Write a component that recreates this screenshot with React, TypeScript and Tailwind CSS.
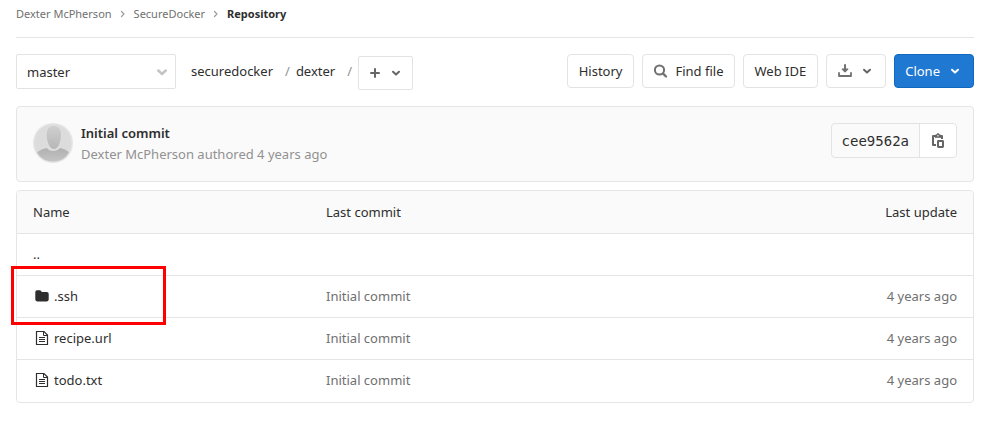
import type { ReactNode } from 'react';

const button =
  'flex h-[34px] items-center gap-1.5 rounded border border-[#e3e3e3] bg-white text-[#2e2e2e] hover:bg-gray-50';

function Chevron({ className = '' }: { className?: string }) {
  return (
    <svg viewBox="0 0 16 16" className={className} fill="none" stroke="currentColor" strokeWidth="2" strokeLinecap="round" strokeLinejoin="round" aria-hidden="true">
      <path d="M5 6.8 8 9.6 11 6.8" />
    </svg>
  );
}

function Separator() {
  return (
    <svg viewBox="0 0 8 8" className="mx-[7px] size-2 text-[#999]" fill="none" stroke="currentColor" strokeWidth="1.2" strokeLinecap="round" strokeLinejoin="round" aria-hidden="true">
      <path d="M2.5 1.5 5 4 2.5 6.5" />
    </svg>
  );
}

function PlusIcon() {
  return (
    <svg viewBox="0 0 16 16" className="size-4 text-[#666]" stroke="currentColor" strokeWidth="2" strokeLinecap="round" aria-hidden="true">
      <path d="M8 4v8M4 8h8" />
    </svg>
  );
}

function SearchIcon() {
  return (
    <svg viewBox="0 0 16 16" className="size-4 text-[#707070]" fill="none" stroke="currentColor" strokeLinecap="round" aria-hidden="true">
      <circle cx="6.5" cy="7" r="4.6" strokeWidth="2" />
      <path d="m10.1 10.6 2.9 2.9" strokeWidth="2.3" />
    </svg>
  );
}

function DownloadIcon() {
  return (
    <svg viewBox="0 0 16 16" className="size-4 text-[#707070]" fill="none" stroke="currentColor" strokeWidth="2" strokeLinecap="round" strokeLinejoin="round" aria-hidden="true">
      <path d="M2 10v3h12v-3" strokeWidth="1.8" />
      <path d="M8 2v5" />
      <path d="M5.2 6 8 8.8 10.8 6z" fill="currentColor" strokeWidth="1.2" />
    </svg>
  );
}

function CopyIcon() {
  return (
    <svg viewBox="0 0 16 16" className="size-4 text-[#666]" fill="none" stroke="currentColor" strokeWidth="2" strokeLinejoin="round" aria-hidden="true">
      <path d="M6 12H3V3h2M11 3h1v3" />
      <path d="M5 4.500V2h1.500a1.500 1.500 0 0 1 3 0H11v2.500z" fill="currentColor" strokeWidth="0.6" />
      <rect x="8" y="8" width="5" height="6" rx="0.4" />
      <path d="M7.2 2.8h1.6" stroke="#fff" strokeWidth="1" />
    </svg>
  );
}

function FolderIcon() {
  return (
    <svg viewBox="0 0 16 16" className="size-4 text-[#2e2e2e]" fill="currentColor" aria-hidden="true">
      <path d="M1.3 4A1.7 1.7 0 0 1 3 2.3h2.8c.5 0 1 .2 1.3.7l.7 1h5A1.9 1.9 0 0 1 14.7 6v5.6a1.8 1.8 0 0 1-1.8 1.8H3.1a1.8 1.8 0 0 1-1.8-1.8z" />
    </svg>
  );
}

function FileIcon() {
  return (
    <svg viewBox="0 0 16 16" className="size-4 text-[#2e2e2e]" fill="none" stroke="currentColor" aria-hidden="true">
      <path d="M2.5 1.5H10L13.5 5v9.5h-11z" strokeWidth="1.2" />
      <path d="M9.5 1.5v4h4M5 7.5h6M5 9.5h6M5 11.5h6" />
    </svg>
  );
}

function Avatar() {
  return (
    <svg viewBox="0 0 40 40" className="size-10" role="img" aria-label="Dexter McPherson">
      <defs>
        <clipPath id="avatar-clip">
          <circle cx="20" cy="20" r="18.6" />
        </clipPath>
        <linearGradient id="head" x1="0" y1="0" x2="0" y2="1">
          <stop offset="0" stopColor="#d0d0d0" />
          <stop offset="1" stopColor="#b6b6b6" />
        </linearGradient>
        <linearGradient id="body" x1="0" y1="0" x2="0" y2="1">
          <stop offset="0" stopColor="#b0b0b0" />
          <stop offset="1" stopColor="#c6c6c6" />
        </linearGradient>
      </defs>
      <circle cx="20" cy="20" r="20" fill="#e5e5e5" />
      <g clipPath="url(#avatar-clip)">
        <rect width="40" height="40" fill="#dcdcdc" />
        <path d="M3 40V32c1-4 6-6 11-7 2 4 10 4 13 0 5 1 9 3 10 7v8z" fill="url(#body)" />
        <path d="M20.5 2.5c5 0 8.2 3.5 8.2 9.5 0 8-3.3 14.5-7.7 14.5S13 20 13 12c0-6 2.5-9.5 7.5-9.5z" fill="url(#head)" stroke="#dedede" strokeWidth="1.2" />
      </g>
    </svg>
  );
}

const files: { name: string; icon: ReactNode; marked?: boolean }[] = [
  { name: '.ssh', icon: <FolderIcon />, marked: true },
  { name: 'recipe.url', icon: <FileIcon /> },
  { name: 'todo.txt', icon: <FileIcon /> },
];

export default function App() {
  return (
    <main className="min-h-screen bg-white pr-[27px] pl-4 font-['Noto_Sans',sans-serif] text-[13px] leading-5 text-[#2e2e2e]">
      <nav aria-label="Breadcrumb" className="flex h-[38px] items-start border-b border-[#e5e5e5] pt-1.5 text-[11px] leading-4 text-[#707070]">
        <ol className="flex items-center">
          <li><a href="#owner">Dexter McPherson</a></li>
          <li><Separator /></li>
          <li><a href="#project">SecureDocker</a></li>
          <li><Separator /></li>
          <li><a href="#repository" aria-current="page" className="font-bold text-[#2e2e2e]">Repository</a></li>
        </ol>
      </nav>

      <div className="flex items-start justify-between pt-4">
        <div className="flex items-start">
          <div className="grid w-40 items-center">
            <select aria-label="Branch" defaultValue="master" className="col-start-1 row-start-1 h-[35px] w-full appearance-none rounded-xs border border-[#e3e3e3] bg-white px-2.5 text-[#2e2e2e]">
              <option>master</option>
            </select>
            <Chevron className="pointer-events-none col-start-1 row-start-1 mr-1 size-5 justify-self-end text-[#c4c4c4]" />
          </div>
          <nav aria-label="Path" className="ml-[15px] flex h-[34px] items-center">
            <a href="#root-folder">securedocker</a>
            <span className="mr-1.5 ml-3 text-[#919191]">/</span>
            <a href="#dexter">dexter</a>
            <span className="ml-3 text-[#919191]">/</span>
          </nav>
          <button type="button" aria-label="Add to tree" className="mt-0.5 ml-1.5 flex h-[34px] items-center gap-[5px] rounded-xs border border-[#e3e3e3] bg-white px-2">
            <PlusIcon />
            <Chevron className="size-4 text-[#666]" />
          </button>
        </div>

        <div className="flex gap-2">
          <button type="button" className={button + ' px-[11px]'}>History</button>
          <button type="button" className={button + ' px-2.5'}><SearchIcon />Find file</button>
          <button type="button" className={button + ' px-[11px]'}>Web IDE</button>
          <button type="button" aria-label="Download" className={button + ' px-2.5'}>
            <DownloadIcon />
            <Chevron className="size-4 text-[#666]" />
          </button>
          <button type="button" className="flex h-[34px] items-center gap-[7px] rounded border border-[#1068bf] bg-[#1f78d1] px-2.5 text-white">
            Clone
            <Chevron className="size-4" />
          </button>
        </div>
      </div>

      <section className="mt-4 flex h-[76px] items-start justify-between rounded border border-[#e5e5e5] bg-[#fafafa] p-4">
        <div className="flex gap-2">
          <Avatar />
          <div className="leading-[21px]">
            <a href="#commit" className="block font-semibold">Initial commit</a>
            <p className="text-[#919191]">Dexter McPherson authored 4 years ago</p>
          </div>
        </div>
        <div className="flex h-[35px] rounded border border-[#e3e3e3]">
          <span className="flex items-center px-2.5 font-['DejaVu_Sans_Mono',monospace] text-sm">cee9562a</span>
          <button type="button" aria-label="Copy commit SHA" className="flex items-center rounded-r border-l border-[#e3e3e3] bg-white px-2.5">
            <CopyIcon />
          </button>
        </div>
      </section>

      <div className="mt-2 rounded border border-[#e5e5e5]">
        <table className="w-full table-fixed border-separate border-spacing-0 text-left">
          <thead>
            <tr className="h-[43px]">
              <th className="w-[293px] rounded-tl border-b border-[#e5e5e5] bg-[#fafafa] px-4 font-normal">Name</th>
              <th className="border-b border-[#e5e5e5] bg-[#fafafa] px-4 font-normal">Last commit</th>
              <th className="rounded-tr border-b border-[#e5e5e5] bg-[#fafafa] px-4 text-right font-normal">Last update</th>
            </tr>
          </thead>
          <tbody>
            <tr className="h-[42px]">
              <td colSpan={3} className="border-b border-[#e5e5e5] px-4 pb-0.5"><a href="#parent">..</a></td>
            </tr>
            {files.map((file) => (
              <tr key={file.name} className="group h-[42px] text-[#707070]">
                <td className="relative border-b border-[#e5e5e5] px-4 pb-0.5 group-last:border-b-0">
                  <a href={'#' + file.name} className="flex items-center gap-1 pl-px text-[#2e2e2e]">
                    {file.icon}
                    {file.name}
                  </a>
                  {file.marked && (
                    <div className="pointer-events-none absolute -top-2.5 -left-1.5 h-[59px] w-[155px] border-3 border-[#ff0000]" />
                  )}
                </td>
                <td className="border-b border-[#e5e5e5] px-4 pb-0.5 group-last:border-b-0">
                  <a href="#commit">Initial commit</a>
                </td>
                <td className="border-b border-[#e5e5e5] px-4 pb-0.5 text-right group-last:border-b-0">4 years ago</td>
              </tr>
            ))}
          </tbody>
        </table>
      </div>
    </main>
  );
}
